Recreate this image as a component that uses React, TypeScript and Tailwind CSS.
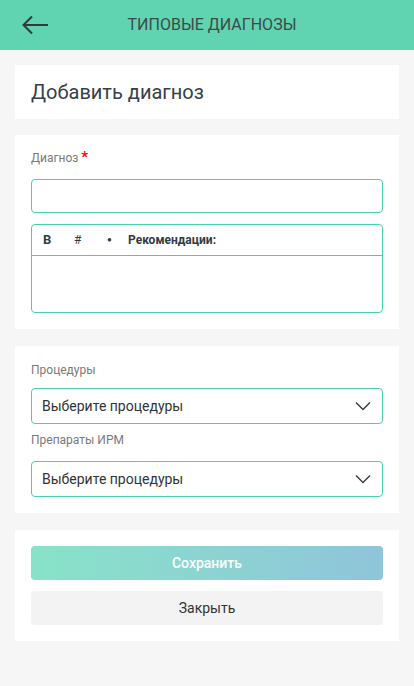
import React from "react"

const font = { fontFamily: "Roboto, 'Noto Sans', sans-serif" }

function Chevron() {
    return <svg width="16" height="10" viewBox="0 0 16 10" fill="none">
        <path d="M1 1.5 L8 8.5 L15 1.5" stroke="#3a3f44" strokeWidth="1.5" />
    </svg>
}

function Select({label, first}: {label: string, first?: boolean}) {
    return <div className={first ? "" : "mt-[8px]"}>
        <p className="text-[12px] leading-[16px] text-[#7a7a7a]">{label}</p>
        <div className={`${first ? "mt-[10px]" : "mt-[13px]"} h-[36px] border border-[#47d1a4] rounded-[4px] flex items-center justify-between pl-[10px] pr-[11px]`}>
            <span className="text-[14px] text-[#333]">Выберите процедуры</span>
            <Chevron />
        </div>
    </div>
}

export default function App() {
    return <div style={font} className="min-h-[686px] bg-[#f6f6f6]">
        <div className="h-[50px] bg-[#60d3b1] flex items-center relative">
            <svg className="absolute left-[22px] top-[15px]" width="27" height="20" viewBox="0 0 27 20" fill="none">
                <path d="M26 10 H2 M10 1.5 L1.5 10 L10 18.5" stroke="#2f3a3a" strokeWidth="2" />
            </svg>
            <h1 className="w-full text-center pl-[10px] text-[16px] text-[#3b4b47]">ТИПОВЫЕ ДИАГНОЗЫ</h1>
        </div>
        <div className="px-[15px] pt-[15px] pb-[45px] flex flex-col">
            <div className="bg-white h-[54px] flex items-center px-[16px]">
                <p className="text-[20px] text-[#37404a]">Добавить диагноз</p>
            </div>
            <div className="bg-white mt-[16px] px-[16px] pt-[15px] pb-[16px]">
                <p className="text-[12px] leading-[16px] text-[#7a7a7a]">Диагноз <span className="text-[#f00] text-[15px] font-bold leading-[10px]">*</span></p>
                <div className="mt-[13px] h-[34px] border border-[#47d1a4] rounded-[4px]"></div>
                <div className="mt-[11px] h-[89px] border border-[#47d1a4] rounded-[4px] flex flex-col">
                    <div className="h-[31px] border-b border-[#47d1a4] flex items-center text-[12px] text-[#333b44]">
                        <span className="ml-[11px] w-[10px] font-bold text-[13px]">B</span>
                        <span className="ml-[21px] w-[8px]">#</span>
                        <span className="ml-[25px] w-[4px] text-[8px]">●</span>
                        <span className="ml-[17px] font-bold">Рекомендации:</span>
                    </div>
                </div>
            </div>
            <div className="bg-white mt-[17px] px-[16px] pt-[16px] pb-[16px]">
                <Select label="Процедуры" first />
                <Select label="Препараты ИРМ" />
            </div>
            <div className="bg-white mt-[17px] px-[16px] pt-[16px] pb-[16px] flex flex-col gap-[11px]">
                <button className="h-[34px] rounded-[4px] bg-gradient-to-r from-[#88e3c8] to-[#8fc4da] text-white text-[14px] font-medium">Сохранить</button>
                <button className="h-[34px] rounded-[4px] bg-[#f3f3f3] text-[#333] text-[14px]">Закрыть</button>
            </div>
        </div>
    </div>
}
